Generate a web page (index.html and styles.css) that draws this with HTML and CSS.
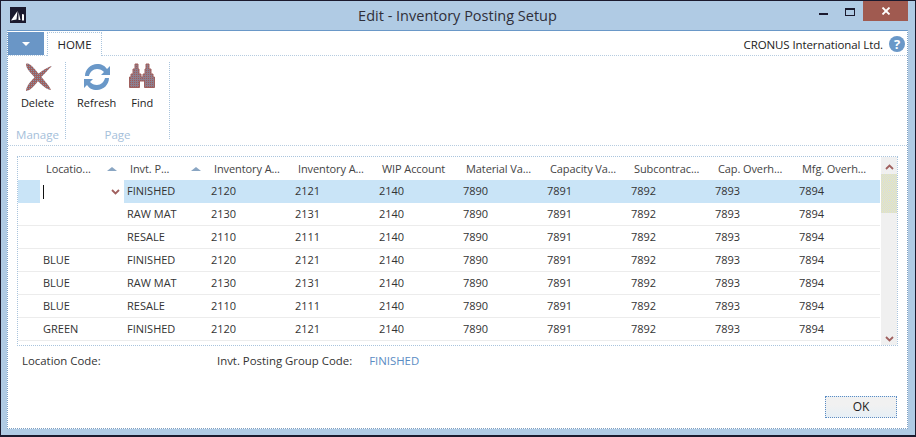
FILE: index.html
```html
<!DOCTYPE html>
<html lang="en">
<head>
<meta charset="utf-8">
<title>Edit - Inventory Posting Setup</title>
<link rel="stylesheet" href="styles.css">
</head>
<body>
<div class="window">
  <header class="titlebar">
    <svg class="logo" width="16" height="16" viewBox="0 0 16 16"><rect width="16" height="16" fill="#1b1a2e"/><path d="M1 13.500 L6.500 12.500 L7.500 4 Z M8.500 13 L8.500 5 L10.500 13 Z M12 13.500 L12 7 L14 7.500 L14 13.500 Z" fill="#fff"/></svg>
    <div class="title">Edit - Inventory Posting Setup</div>
    <div class="controls">
      <span class="min"></span>
      <span class="max"></span>
      <span class="close"><svg width="10" height="8" viewBox="0 0 10 8"><path d="M1.500 .5 L8.500 7.500 M8.500 .5 L1.500 7.500" stroke="#fff" stroke-width="1.800"/></svg></span>
    </div>
  </header>
  <main class="panel">
    <div class="tabs">
      <div class="menu-btn"><span class="tri"></span></div>
      <div class="tab">HOME</div>
      <div class="company">CRONUS International Ltd.</div>
      <div class="help">?</div>
    </div>
    <div class="ribbon">
      <section class="group group-manage">
        <div class="actions">
          <div class="action action-delete">
            <svg width="30" height="30" viewBox="0 0 30 30"><defs><pattern id="mesh" width="2" height="2" patternUnits="userSpaceOnUse"><rect width="2" height="2" fill="#a0605e"/><rect width="1" height="1" fill="#8094ae"/></pattern></defs><path d="M3 2 C6 0 10 5 15 11 C20 17 26 23 28 28 C25 28 19 24 14 18 C8 11 3 7 3 2 Z" fill="url(#mesh)"/><path d="M29 4 C24 5 15 11 9 18 C5 22 3 26 3 29 C6 29 11 25 15 19 C19 14 25 8 29 4 Z" fill="url(#mesh)"/></svg>
            <span>Delete</span>
          </div>
        </div>
        <div class="group-name">Manage</div>
      </section>
      <section class="group group-page">
        <div class="actions">
          <div class="action action-refresh">
            <svg width="30" height="30" viewBox="0 0 30 30"><path d="M3 14 C3 7 9 2 15 2 C20 2 23 4 25 7 L28 4 L28 13 L19 13 L22 10 C20 8 18 7 15 7 C11 7 8 10 7 14 Z" fill="#6a98c8"/><path d="M27 16 C27 23 21 28 15 28 C10 28 7 26 5 23 L2 26 L2 17 L11 17 L8 20 C10 22 12 23 15 23 C19 23 22 20 23 16 Z" fill="#6a98c8"/></svg>
            <span>Refresh</span>
          </div>
          <div class="action action-find">
            <svg width="28" height="30" viewBox="0 0 28 30"><defs><pattern id="hatch" width="2" height="2" patternUnits="userSpaceOnUse"><rect width="2" height="2" fill="#8d7f8f"/><rect width="1" height="1" fill="#a05a58"/></pattern></defs><path d="M7 2 H10 V7 H11 V12 H13 V15 H15 V12 H17 V7 H18 V2 H21 V7 H23 V12 H25 V15 H26.500 V25.500 H16.500 V19 H11.500 V25.500 H1.500 V15 H3 V12 H5 V7 H7 Z" fill="url(#hatch)" stroke="#a0605e"/></svg>
            <span>Find</span>
          </div>
        </div>
        <div class="group-name">Page</div>
      </section>
    </div>
    <div class="content">
      <div class="list">
        <div class="table">
          <div class="row head">
            <div class="sel"></div>
            <div class="h sorted">Locatio...<i></i></div>
            <div class="h sorted">Invt. P...<i></i></div>
            <div class="h">Inventory A...</div>
            <div class="h">Inventory A...</div>
            <div class="h">WIP Account</div>
            <div class="h">Material Va...</div>
            <div class="h">Capacity Va...</div>
            <div class="h">Subcontrac...</div>
            <div class="h">Cap. Overh...</div>
            <div class="h">Mfg. Overh...</div>
          </div>
          <div class="row current">
            <div class="sel"></div>
            <div class="c editor"><span class="caret"></span><svg width="9" height="6" viewBox="0 0 9 6"><path d="M1 1 L4.500 4.500 L8 1" fill="none" stroke="#a0605e" stroke-width="1.800"/></svg></div>
            <div class="c">FINISHED</div><div class="c">2120</div><div class="c">2121</div><div class="c">2140</div><div class="c">7890</div><div class="c">7891</div><div class="c">7892</div><div class="c">7893</div><div class="c">7894</div>
          </div>
          <div class="row">
            <div class="sel"></div><div class="c"></div>
            <div class="c">RAW MAT</div><div class="c">2130</div><div class="c">2131</div><div class="c">2140</div><div class="c">7890</div><div class="c">7891</div><div class="c">7892</div><div class="c">7893</div><div class="c">7894</div>
          </div>
          <div class="row">
            <div class="sel"></div><div class="c"></div>
            <div class="c">RESALE</div><div class="c">2110</div><div class="c">2111</div><div class="c">2140</div><div class="c">7890</div><div class="c">7891</div><div class="c">7892</div><div class="c">7893</div><div class="c">7894</div>
          </div>
          <div class="row">
            <div class="sel"></div><div class="c">BLUE</div>
            <div class="c">FINISHED</div><div class="c">2120</div><div class="c">2121</div><div class="c">2140</div><div class="c">7890</div><div class="c">7891</div><div class="c">7892</div><div class="c">7893</div><div class="c">7894</div>
          </div>
          <div class="row">
            <div class="sel"></div><div class="c">BLUE</div>
            <div class="c">RAW MAT</div><div class="c">2130</div><div class="c">2131</div><div class="c">2140</div><div class="c">7890</div><div class="c">7891</div><div class="c">7892</div><div class="c">7893</div><div class="c">7894</div>
          </div>
          <div class="row">
            <div class="sel"></div><div class="c">BLUE</div>
            <div class="c">RESALE</div><div class="c">2110</div><div class="c">2111</div><div class="c">2140</div><div class="c">7890</div><div class="c">7891</div><div class="c">7892</div><div class="c">7893</div><div class="c">7894</div>
          </div>
          <div class="row">
            <div class="sel"></div><div class="c">GREEN</div>
            <div class="c">FINISHED</div><div class="c">2120</div><div class="c">2121</div><div class="c">2140</div><div class="c">7890</div><div class="c">7891</div><div class="c">7892</div><div class="c">7893</div><div class="c">7894</div>
          </div>
        </div>
        <div class="scrollbar">
          <svg width="9" height="6" viewBox="0 0 9 6"><path d="M1 5 L4.500 1.500 L8 5" fill="none" stroke="#a0605e" stroke-width="1.800"/></svg>
          <div class="thumb"></div>
          <div class="spacer"></div>
          <svg width="9" height="6" viewBox="0 0 9 6"><path d="M1 1 L4.500 4.500 L8 1" fill="none" stroke="#a0605e" stroke-width="1.800"/></svg>
        </div>
      </div>
      <div class="details">
        <span class="label l1">Location Code:</span>
        <span class="label">Invt. Posting Group Code:</span>
        <span class="value">FINISHED</span>
      </div>
      <div class="footer"><button class="ok">OK</button></div>
    </div>
  </main>
</div>
</body>
</html>
```
FILE: styles.css
```css
* { box-sizing: border-box; }
html, body { margin: 0; padding: 0; }
body {
  width: 916px;
  height: 437px;
  overflow: hidden;
  font-family: "Open Sans", "Noto Sans", sans-serif;
  font-size: 11px;
  color: #222;
}
.window {
  width: 916px;
  height: 437px;
  background: #b0cbe4;
  border: 1px solid #1b1a2e;
  border-bottom-width: 2px;
  padding: 0 7px 6px 6px;
  display: flex;
  flex-direction: column;
}
.titlebar {
  height: 29px;
  flex: none;
  display: flex;
  align-items: flex-start;
}
.logo { margin: 6px 0 0 3px; flex: none; }
.title {
  flex: 1;
  text-align: center;
  font-size: 14.500px;
  line-height: 20px;
  padding: 5px 0 0 70px;
  color: #2f2f3a;
}
.controls { display: flex; align-items: flex-start; height: 21px; }
.min { width: 9px; height: 2px; background: #1b1a2e; margin: 12px 17px 0 0; }
.max { width: 10px; height: 8px; border: 1px solid #1b1a2e; border-top-width: 2px; margin: 7px 8px 0 0; }
.close { width: 45px; height: 20px; background: #a05a50; display: flex; align-items: center; justify-content: center; }
.panel {
  flex: 1;
  background: #fff;
  border-top: 1px solid #6a98c8;
  border-left: 1px dotted #7d9fc2;
  border-right: 1px dotted #7d9fc2;
  border-bottom: 1px dotted #7d9fc2;
  display: flex;
  flex-direction: column;
  min-height: 0;
}
.tabs {
  height: 25px;
  flex: none;
  display: flex;
  align-items: stretch;
  border-bottom: 1px dotted #b6cce0;
  padding-top: 1px;
}
.menu-btn {
  width: 36px;
  height: 23px;
  background: #6a96c6;
  display: flex;
  align-items: center;
  justify-content: center;
}
.tri { width: 0; height: 0; border-left: 4px solid transparent; border-right: 4px solid transparent; border-top: 4px solid #fff; }
.tab {
  width: 55px;
  margin: 0 0 -1px 3px;
  background: #fff;
  border: 1px dotted #a9c4dd;
  border-bottom: 0;
  text-align: center;
  line-height: 24px;
  font-size: 11.500px;
  color: #222;
}
.company {
  margin-left: auto;
  line-height: 25px;
  font-size: 11.500px;
  color: #222;
  letter-spacing: -0.1px;
}
.help {
  width: 16px;
  height: 16px;
  border-radius: 50%;
  background: #6a98c8;
  color: #fff;
  font-weight: 700;
  font-size: 13px;
  line-height: 16px;
  text-align: center;
  margin: 4px 2px 0 6px;
}
.ribbon {
  height: 90px;
  flex: none;
  display: flex;
  border-bottom: 1px dotted #b6cce0;
  padding-top: 6px;
}
.group {
  border-right: 1px dotted #a9c4dd;
  height: 77px;
  display: flex;
  flex-direction: column;
}
.group-manage { width: 58px; padding-left: 2px; }
.group-page { width: 104px; }
.actions { display: flex; flex: 1; justify-content: flex-start; padding-left: 11px; gap: 12px; }
.group-manage .actions { justify-content: center; padding-left: 0; }
.action {
  display: flex;
  flex-direction: column;
  align-items: center;
  font-size: 11px;
  line-height: 16px;
  color: #222;
}
.action svg { margin-bottom: 3px; }
.group-name {
  text-align: center;
  color: #a5c0da;
  font-size: 11.500px;
  line-height: 16px;
  margin-bottom: -4px;
  flex: none;
}
.content {
  flex: 1;
  display: flex;
  flex-direction: column;
  padding: 10px 9px 0 9px;
  min-height: 0;
}
.list {
  height: 190px;
  flex: none;
  display: flex;
  border: 1px dotted #a9c4dd;
}
.table { width: 862px; flex: none; }
.row {
  display: grid;
  grid-template-columns: 22px 84px 84px 84px 84px 84px 84px 84px 84px 84px 84px;
  height: 23px;
  border-bottom: 1px solid #ececec;
  line-height: 22px;
  font-size: 11px;
  color: #333;
}
.row.head { border-bottom: 0; color: #444; }
.row.current { background: #c9e4f7; border-bottom: 0; }
.h { padding-left: 6px; white-space: nowrap; overflow: hidden; display: flex; align-items: center; letter-spacing: -0.1px; }
.h i {
  margin-left: auto;
  margin-right: 7px;
  width: 0; height: 0;
  border-left: 5px solid transparent;
  border-right: 5px solid transparent;
  border-bottom: 4px solid #8aa6c3;
}
.c { padding-left: 3px; white-space: nowrap; }
.editor {
  background: #fff;
  display: flex;
  align-items: center;
  justify-content: space-between;
  padding-right: 4px;
}
.caret { width: 1px; height: 14px; background: #111; }
.scrollbar {
  width: 16px;
  margin-left: 1px;
  background: #f0f0f0;
  display: flex;
  flex-direction: column;
  align-items: center;
  padding: 7px 0 3px;
}
.thumb {
  width: 16px;
  height: 39px;
  margin-top: 4px;
  background: repeating-conic-gradient(#eee8b0 0 25%, #cfdcea 0 50%) 0 0 / 2px 2px;
}
.spacer { flex: 1; }
.details {
  display: flex;
  padding: 7px 0 0 5px;
  line-height: 16px;
  font-size: 11.400px;
  color: #333;
}
.l1 { width: 195px; }
.value { margin-left: 17px; color: #5a8cc4; }
.footer {
  flex: 1;
  display: flex;
  justify-content: flex-end;
  align-items: flex-end;
  padding: 0 1px 10px 0;
}
.ok {
  width: 72px;
  height: 22px;
  border: 1px dotted #5a8cc4;
  background: linear-gradient(#f1f1f1 40%, #e6eff6);
  font: 12px/20px "Open Sans", "Noto Sans", sans-serif;
  color: #222;
  padding: 0;
}
```
